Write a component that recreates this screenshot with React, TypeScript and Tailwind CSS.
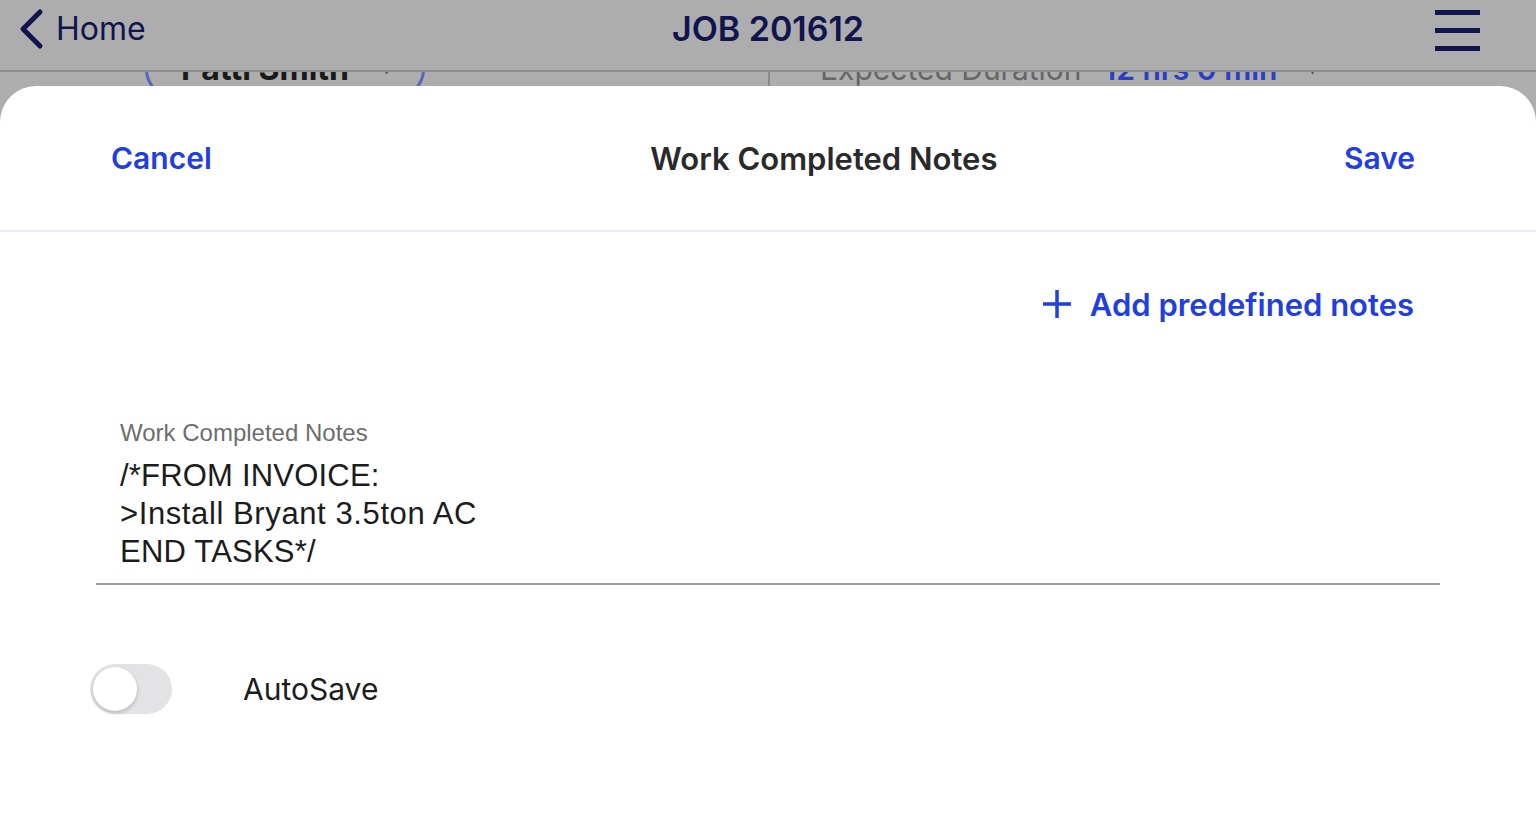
import React, { useState } from "react";

const navy = "text-[#10144f]";

export default function App() {
  const [autoSave, setAutoSave] = useState(false);

  return (
    <div className="h-[837px] w-full overflow-hidden bg-[#adadad] flex flex-col font-['Inter',sans-serif]">
      {/* dimmed page header */}
      <div className="h-[72px] shrink-0 grid grid-cols-[1fr_auto_1fr] items-start pt-[8px] border-b-2 border-[#8e8e8e]">
        <div className="flex items-center pl-[16px] h-[42px]">
          <svg width="30" height="42" viewBox="0 0 30 42" fill="none">
            <path d="M24 4 L7 21 L24 38" stroke="#10144f" strokeWidth="5" strokeLinecap="round" strokeLinejoin="round" />
          </svg>
          <span className={`ml-[10px] text-[32px] leading-none ${navy}`}>Home</span>
        </div>
        <div className={`h-[42px] flex items-center text-[34px] font-semibold leading-none ${navy}`}>JOB 201612</div>
        <div className="flex justify-end pr-[56px] pt-[2px]">
          <div className="flex flex-col gap-[13px]">
            <div className="w-[45px] h-[5px] bg-[#10144f]" />
            <div className="w-[45px] h-[5px] bg-[#10144f]" />
            <div className="w-[45px] h-[5px] bg-[#10144f]" />
          </div>
        </div>
      </div>

      {/* page content peeking under the sheet */}
      <div className="h-[14px] shrink-0 overflow-hidden">
        <div className="flex items-start -mt-[33px]">
          <div className="ml-[145px] w-[280px] h-[60px] rounded-[30px] border-[3px] border-[#5766c0] flex items-center pl-[33px] gap-[34px]">
            <span className="text-[32px] font-bold text-[#1a1a1a] leading-none">Patti Smith</span>
            <span className="text-[14px] text-[#555]">▾</span>
          </div>
          <div className="ml-[343px] w-[2px] h-[60px] bg-[#8a8a8a]" />
          <div className="ml-[50px] flex items-center gap-[22px] h-[60px]">
            <span className="text-[30px] text-[#666] leading-none">Expected Duration</span>
            <span className="text-[30px] font-semibold text-[#2a3fc8] leading-none">12 hrs 0 min</span>
            <span className="ml-[10px] text-[14px] text-[#555]">▾</span>
          </div>
        </div>
      </div>

      {/* sheet */}
      <div className="flex-1 bg-white rounded-t-[36px] flex flex-col">
        <div className="h-[144px] shrink-0 flex items-center pl-[111px] pr-[121px]">
          <button className="text-[30px] font-semibold text-[#213ee0] leading-none">Cancel</button>
          <div className="flex-1 text-center pl-[92px] text-[31px] font-semibold text-[#2a2a2a] leading-none">
            Work Completed Notes
          </div>
          <button className="text-[30px] font-semibold text-[#213ee0] leading-none">Save</button>
        </div>
        <div className="h-[2px] bg-[#e9e9f6]" />

        <div className="mt-[52px] h-[40px] flex items-center justify-end pr-[122px]">
          <button className="flex items-center gap-[18px] text-[#213ee0]">
            <svg width="30" height="30" viewBox="0 0 30 30">
              <path d="M15 1 V29 M1 15 H29" stroke="#213ee0" strokeWidth="3.5" />
            </svg>
            <span className="text-[31px] font-semibold leading-none">Add predefined notes</span>
          </button>
        </div>

        <div className="mt-[95px] mx-[96px] border-b-2 border-[#9b9b9b] pb-[12px] pl-[24px] font-['Liberation_Sans',sans-serif]">
          <div className="text-[24px] leading-[28px] text-[#6d6d6d]">Work Completed Notes</div>
          <div className="mt-[10px] text-[31px] leading-[38px] text-[#1c1c1c] tracking-[0.2px]">
            <div>/*FROM INVOICE:</div>
            <div className="tracking-[0.6px]">&gt;Install Bryant 3.5ton AC</div>
            <div>END TASKS*/</div>
          </div>
        </div>

        <div className="mt-[79px] flex items-center pl-[90px]">
          <button
            onClick={() => setAutoSave(!autoSave)}
            className={`w-[82px] h-[50px] rounded-full p-[3px] flex ${autoSave ? "bg-[#34c759] justify-end" : "bg-[#e3e3e6] justify-start"}`}
          >
            <span className="w-[44px] h-[44px] rounded-full bg-white shadow-[0_2px_4px_rgba(0,0,0,0.2)]" />
          </button>
          <span className="ml-[71px] text-[30px] text-[#1c1c1c] leading-none">AutoSave</span>
        </div>
      </div>
    </div>
  );
}
